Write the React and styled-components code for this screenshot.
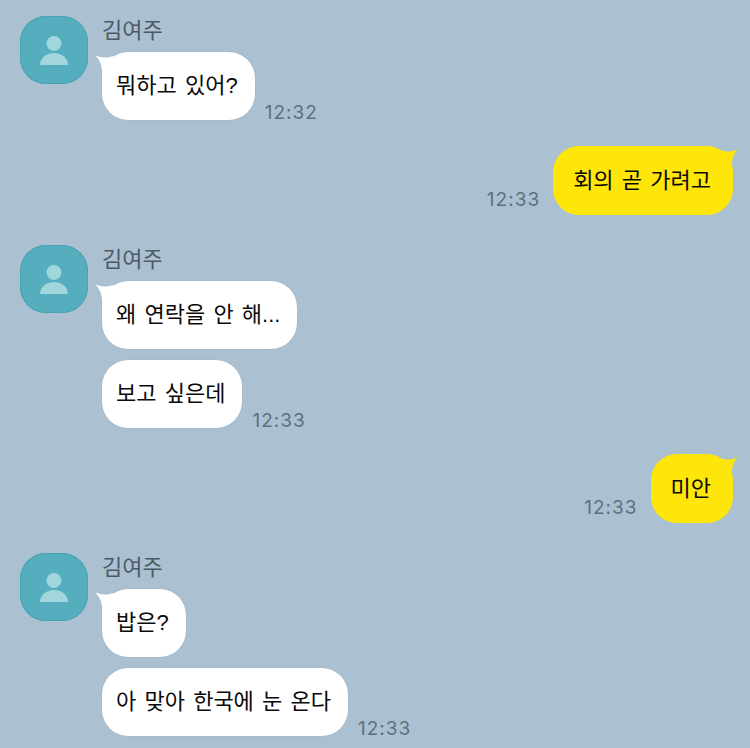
import React from "react";
import styled, { createGlobalStyle } from "styled-components";

const GlobalStyle = createGlobalStyle`
  html, body {
    margin: 0;
    padding: 0;
    background-color: #abc1d1;
  }
`;

const Chat = styled.div`
  width: 750px;
  height: 748px;
  overflow: hidden;
  box-sizing: border-box;
  padding: 16px 17px 0 20px;
  background-color: #abc1d1;
  font-family: "Liberation Sans", "Noto Sans CJK KR", sans-serif;
  display: flex;
  flex-direction: column;
`;

const Incoming = styled.div`
  display: flex;
  gap: 14px;
  margin-bottom: ${(p) => p.$after}px;
`;

const Avatar = styled.div`
  width: 68px;
  height: 68px;
  flex: none;
  border-radius: 26px;
  background-color: #54aebd;
  box-shadow: inset 0 0 0 1px #4ba2b0;
  display: flex;
  align-items: center;
  justify-content: center;
`;

const Stack = styled.div`
  display: flex;
  flex-direction: column;
  gap: 11px;
`;

const Name = styled.div`
  height: 36px;
  line-height: 30px;
  font-size: 22px;
  color: #4d5a66;
  margin-bottom: -11px;
`;

const Line = styled.div`
  display: flex;
  align-items: flex-end;
  gap: 10px;
`;

const Outgoing = styled(Line)`
  justify-content: flex-end;
  gap: 13px;
  margin-bottom: ${(p) => p.$after}px;
`;

const Bubble = styled.div`
  position: relative;
  height: ${(p) => (p.$mine ? 69 : 68)}px;
  box-sizing: border-box;
  padding: 0 ${(p) => (p.$mine ? 22 : 17)}px 0 ${(p) => (p.$mine ? 20 : 14)}px;
  border-radius: 26px;
  background-color: ${(p) => (p.$mine ? "#fee50a" : "#ffffff")};
  box-shadow: ${(p) => (p.$mine ? "none" : "0 0 1px rgba(80, 100, 120, 0.45)")};
  color: #0a0a0a;
  font-size: 22px;
  word-spacing: 2.1px;
  line-height: ${(p) => (p.$mine ? 69 : 67)}px;
  white-space: nowrap;
`;

const Tail = styled.svg`
  position: absolute;
  top: 1px;
  ${(p) => (p.$mine ? "right: -5px;" : "left: -7px;")}
  width: 30px;
  height: 24px;
`;

const Time = styled.span`
  font-family: "Inter", "Liberation Sans", sans-serif;
  font-size: 19px;
  line-height: 22px;
  color: #5f6f7f;
  letter-spacing: 1px;
  margin-bottom: ${(p) => (p.$mine ? 4 : -4)}px;
`;

function PersonIcon() {
  return (
    <svg width="28" height="29" viewBox="0 0 28 29" fill="#a0d6dc">
      <circle cx="14" cy="7.5" r="7.5" />
      <path d="M0 29c0-7 6-12 14-12s14 5 14 12z" />
    </svg>
  );
}

function LeftTail() {
  return (
    <Tail viewBox="0 0 30 24">
      <path d="M0 2C4 4 9 6 18 3L22 10L12 23L7 23C8 14 5 7 0 2z" fill="#ffffff" />
    </Tail>
  );
}

function RightTail() {
  return (
    <Tail $mine viewBox="0 0 30 24">
      <path d="M30 2C26 4 21 6 12 3L8 10L18 23L24 23C23 14 25 7 30 2z" fill="#fee50a" />
    </Tail>
  );
}

function Received({ messages, time, after }) {
  return (
    <Incoming $after={after}>
      <Avatar>
        <PersonIcon />
      </Avatar>
      <Stack>
        <Name>김여주</Name>
        {messages.map((text, i) => (
          <Line key={text}>
            <Bubble>
              {i === 0 && <LeftTail />}
              {text}
            </Bubble>
            {i === messages.length - 1 && <Time>{time}</Time>}
          </Line>
        ))}
      </Stack>
    </Incoming>
  );
}

function Sent({ text, time, after }) {
  return (
    <Outgoing $after={after}>
      <Time $mine>{time}</Time>
      <Bubble $mine>
        <RightTail />
        {text}
      </Bubble>
    </Outgoing>
  );
}

export default function App() {
  return (
    <>
      <GlobalStyle />
      <Chat>
        <Received messages={["뭐하고 있어?"]} time="12:32" after={26} />
        <Sent text="회의 곧 가려고" time="12:33" after={30} />
        <Received messages={["왜 연락을 안 해...", "보고 싶은데"]} time="12:33" after={26} />
        <Sent text="미안" time="12:33" after={30} />
        <Received messages={["밥은?", "아 맞아 한국에 눈 온다"]} time="12:33" after={0} />
      </Chat>
    </>
  );
}
